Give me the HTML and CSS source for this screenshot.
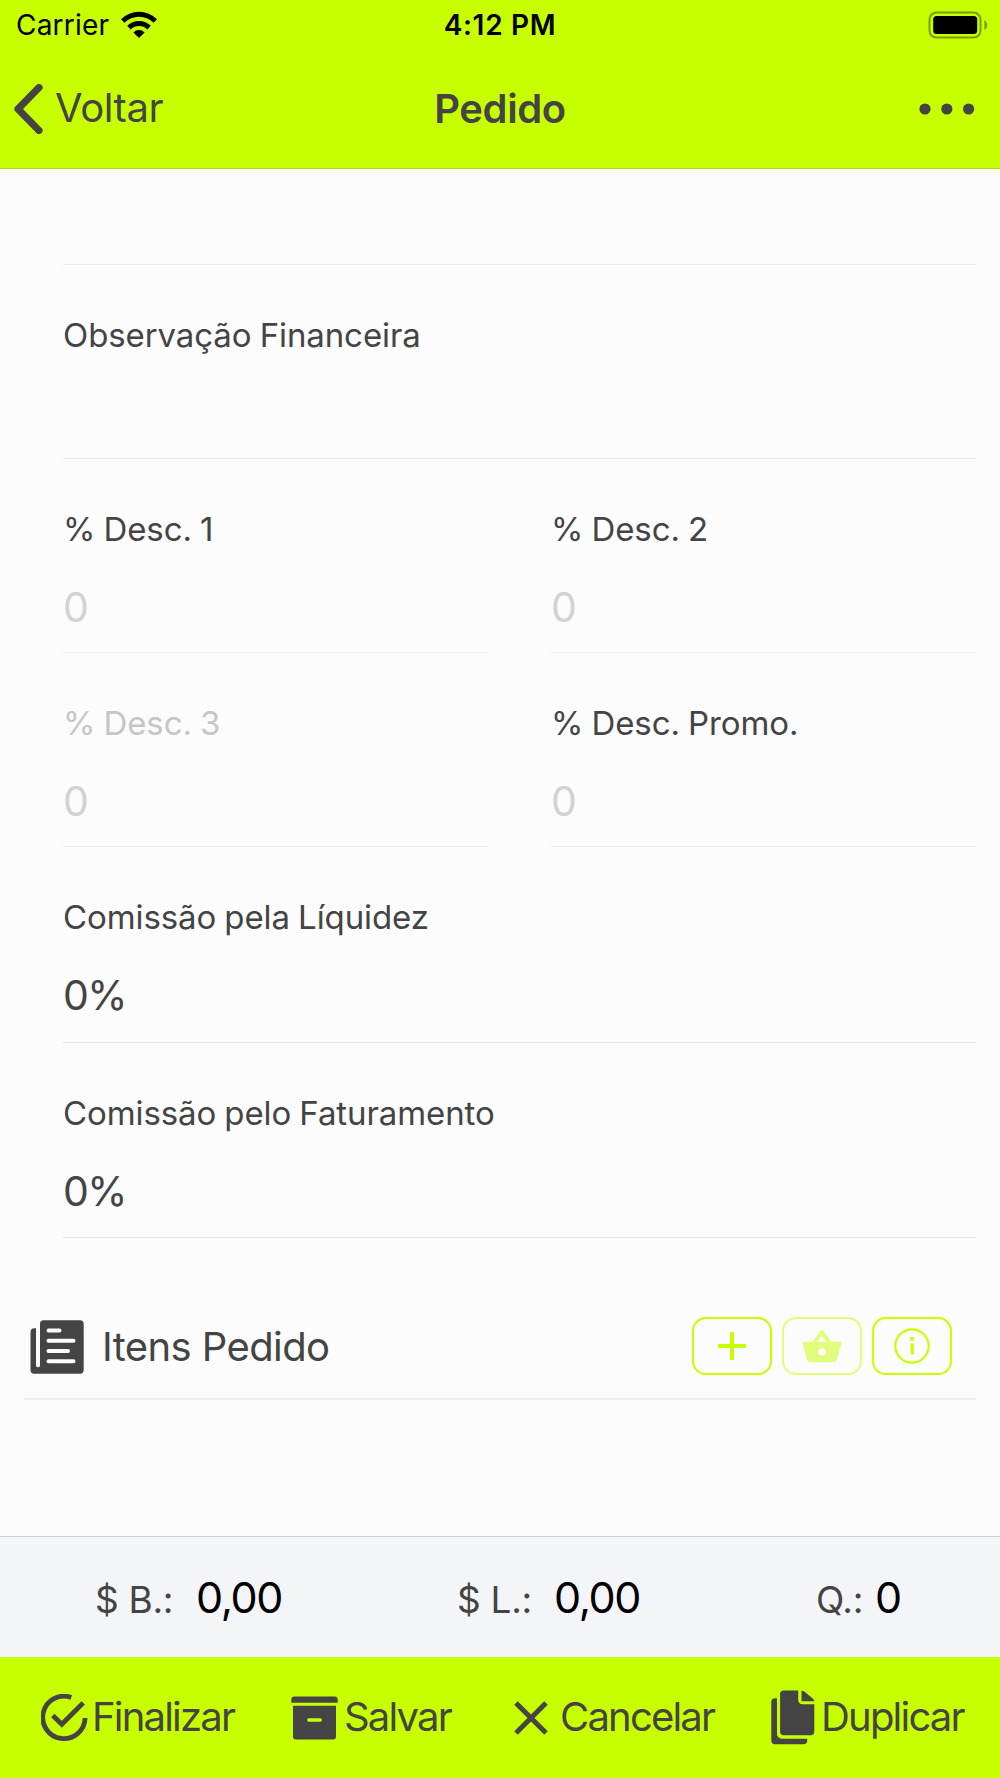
FILE: index.html
```html
<!DOCTYPE html>
<html lang="pt-BR">
<head>
    <meta charset="UTF-8">
    <meta name="viewport" content="width=device-width, initial-scale=1.0">
    <title>Pedido</title>
    <link rel="stylesheet" href="styles.css">
</head>
<body>
    <header class="header">
        <div class="status-bar">
            <div class="carrier">
                <span class="carrier-name">Carrier</span>
                <svg class="wifi" width="38" height="28" viewBox="0 0 38 28">
                    <path d="M1 8.200A25.500 25.500 0 0 1 37 8.200L33.600 11.800A20.600 20.600 0 0 0 4.400 11.800Z"/>
                    <path d="M7.200 14.800A16.800 16.800 0 0 1 30.800 14.800L27.400 18.400A11.900 11.900 0 0 0 10.600 18.400Z"/>
                    <path d="M13.400 21.400A7.900 7.900 0 0 1 24.600 21.400L19 27Z"/>
                </svg>
            </div>
            <span class="clock">4:12 PM</span>
            <svg class="battery" width="60" height="28" viewBox="0 0 60 28">
                <rect x="1.500" y="1.500" width="51" height="25" rx="7" fill="none" stroke="#7b9d00" stroke-width="2"/>
                <rect x="5.200" y="5" width="44" height="18" rx="3.500"/>
                <path d="M56.300 9.200C60 11 60 17.200 56.300 19Z" fill="#7b9d00"/>
            </svg>
        </div>
        <nav class="navbar">
            <a class="back">
                <svg width="30" height="50" viewBox="0 0 30 50">
                    <path d="M26 3.600L5 25L26 46.400" fill="none" stroke="#444" stroke-width="7.200" stroke-linecap="round" stroke-linejoin="round"/>
                </svg>
                <span class="back-text">Voltar</span>
            </a>
            <h1 class="title">Pedido</h1>
            <svg class="more" width="56" height="12" viewBox="0 0 56 12">
                <circle cx="6" cy="6" r="5.600"/>
                <circle cx="27.800" cy="6" r="5.600"/>
                <circle cx="49.600" cy="6" r="5.600"/>
            </svg>
        </nav>
    </header>

    <main class="content">
        <form class="form">
            <div class="field field-empty"></div>
            <div class="field">
                <label class="label">Observação Financeira</label>
            </div>
            <div class="field half">
                <label class="label">% Desc. 1</label>
                <div class="value placeholder">0</div>
            </div>
            <div class="field half">
                <label class="label">% Desc. 2</label>
                <div class="value placeholder">0</div>
            </div>
            <div class="field half">
                <label class="label disabled">% Desc. 3</label>
                <div class="value placeholder">0</div>
            </div>
            <div class="field half">
                <label class="label">% Desc. Promo.</label>
                <div class="value placeholder">0</div>
            </div>
            <div class="field tall">
                <label class="label">Comissão pela Líquidez</label>
                <div class="value">0%</div>
            </div>
            <div class="field tall">
                <label class="label">Comissão pelo Faturamento</label>
                <div class="value">0%</div>
            </div>
        </form>

        <section class="items">
            <svg class="items-icon" width="54" height="54" viewBox="0 0 54 54">
                <path d="M6 8.300V46a2.200 2.200 0 0 0 4 0V4a3.700 3.700 0 0 1 3.700-3.700H50A3.700 3.700 0 0 1 53.700 4V50A3.700 3.700 0 0 1 50 53.700H4.200A3.700 3.700 0 0 1 .5 50V12.300A4 4 0 0 1 4.500 8.300Z"/>
                <path d="M18.500 10.400H29.500M18.500 20.700H43.500M18.500 31H38M18.500 41.300H43.500" stroke="#fcfcfc" stroke-width="4" stroke-linecap="round"/>
            </svg>
            <h2 class="items-title">Itens Pedido</h2>
            <div class="actions">
                <button class="btn">
                    <svg width="28" height="28" viewBox="0 0 28 28">
                        <path d="M14 0V28M0 14H28" stroke="#c8ff00" stroke-width="4"/>
                    </svg>
                </button>
                <button class="btn btn-disabled">
                    <svg width="40" height="34" viewBox="0 0 40 34">
                        <path d="M12 14L20 3L28 14" fill="none" stroke="#c8ff00" stroke-width="4" stroke-linejoin="round"/>
                        <path fill="#c8ff00" fill-rule="evenodd" d="M2 12.800H38A1.700 1.700 0 0 1 39.300 15L34.600 31.200A3 3 0 0 1 31.800 33.300H8.200A3 3 0 0 1 5.400 31.200L.700 15A1.700 1.700 0 0 1 2 12.800ZM20 19.300A3.600 3.600 0 1 0 20 26.500A3.600 3.600 0 1 0 20 19.300Z"/>
                    </svg>
                </button>
                <button class="btn">
                    <svg width="36" height="36" viewBox="0 0 36 36">
                        <circle cx="18" cy="18" r="16.700" fill="none" stroke="#c8ff00" stroke-width="2.200"/>
                        <circle cx="18.100" cy="10.800" r="2.100" fill="#c8ff00"/>
                        <path d="M16.200 15.200H19.800V26.500H16.700V17H16.200Z" fill="#c8ff00"/>
                    </svg>
                </button>
            </div>
        </section>
    </main>

    <section class="totals">
        <div class="total"><span class="total-label">$ B.:</span><span class="total-value">0,00</span></div>
        <div class="total"><span class="total-label">$ L.:</span><span class="total-value">0,00</span></div>
        <div class="total total-qty"><span class="total-label">Q.:</span><span class="total-value">0</span></div>
    </section>

    <footer class="toolbar">
        <a class="tool finalizar">
            <svg width="48" height="48" viewBox="0 0 48 48" fill="none" stroke="#444" stroke-width="4.800">
                <path d="M30.200 3.500A21.200 21.200 0 1 0 44.100 24"/>
                <path d="M11.800 21.500L20.800 30.300L42.200 8.900"/>
            </svg>
            <span>Finalizar</span>
        </a>
        <a class="tool salvar">
            <svg width="47" height="44" viewBox="0 0 47 44">
                <path d="M3.500 .5H43.500A3.200 3.200 0 0 1 46.700 3.700V6.700H.300V3.700A3.200 3.200 0 0 1 3.500 .5Z"/>
                <path d="M2 9.700H45V40.500A3 3 0 0 1 42 43.500H5A3 3 0 0 1 2 40.500Z"/>
                <path d="M17.800 24H29.200" stroke="#c8ff00" stroke-width="3.400" stroke-linecap="round"/>
            </svg>
            <span>Salvar</span>
        </a>
        <a class="tool cancelar">
            <svg width="34" height="34" viewBox="0 0 34 34">
                <path d="M2 2L32 32M32 2L2 32" stroke="#444" stroke-width="5"/>
            </svg>
            <span>Cancelar</span>
        </a>
        <a class="tool duplicar">
            <svg width="44" height="55" viewBox="0 0 44 55">
                <path d="M4 8.300H6V44A4.700 4.700 0 0 0 10.700 48.700H36.300V50.200A4 4 0 0 1 32.300 54.200H4A3.700 3.700 0 0 1 .300 50.500V12A3.700 3.700 0 0 1 4 8.300Z"/>
                <path d="M12.800 .500H27.200V10A4.200 4.200 0 0 0 31.400 14.200H43.300V41.500A3.700 3.700 0 0 1 39.600 45.200H12.800A3.700 3.700 0 0 1 9.100 41.500V4.200A3.700 3.700 0 0 1 12.800 .500Z"/>
                <path d="M30.500 .700Q32.500 .700 34 2.100L42 8.700Q43.300 9.900 43.300 11.200H30.500Z"/>
            </svg>
            <span>Duplicar</span>
        </a>
    </footer>
</body>
</html>
```
FILE: styles.css
```css
* {
    box-sizing: border-box;
}
body {
    margin: 0;
    width: 1000px;
    height: 1778px;
    display: flex;
    flex-direction: column;
    background-color: #fcfcfc;
    color: #444;
    font-family: Inter, "Liberation Sans", sans-serif;
    overflow: hidden;
}
svg {
    display: block;
    flex-shrink: 0;
}

/* header */
.header {
    background-color: #c8ff00;
    border-bottom: 1px solid #abda05;
}
.status-bar {
    display: grid;
    grid-template-columns: 1fr auto 1fr;
    align-items: center;
    height: 50px;
    padding: 0 12px;
    color: #000;
    font-size: 28px;
    line-height: 50px;
}
.carrier {
    display: flex;
    align-items: center;
    padding-left: 4px;
    letter-spacing: 0.2px;
}
.carrier-name {
    width: 104px;
}
.clock {
    font-weight: 600;
    letter-spacing: 0.7px;
}
.battery {
    justify-self: end;
}
.navbar {
    display: grid;
    grid-template-columns: 1fr auto 1fr;
    align-items: center;
    height: 118px;
    padding: 0 13px;
    font-size: 40px;
    letter-spacing: -0.4px;
}
.back {
    display: flex;
    align-items: center;
    gap: 12px;
}
.back-text {
    padding-bottom: 3px;
}
.title {
    margin: 0;
    padding-bottom: 2px;
    font-size: 40px;
    font-weight: 600;
}
.more {
    justify-self: end;
    margin-right: 12px;
    fill: #444;
}

/* form */
.content {
    flex: 1;
}
.form {
    display: grid;
    grid-template-columns: 1fr 1fr;
    column-gap: 63px;
    padding: 0 24px 0 63px;
}
.field {
    grid-column: span 2;
    height: 194px;
    padding-top: 50px;
    border-bottom: 1px solid #ebebeb;
}
.field-empty {
    height: 96px;
}
.half {
    grid-column: span 1;
}
.tall {
    height: 195.5px;
    border-bottom-color: #e4e4e4;
}
.label {
    display: block;
    font-size: 33px;
    line-height: 40px;
    letter-spacing: -0.1px;
    word-spacing: -1px;
}
.disabled {
    color: #c6c6c6;
}
.value {
    margin-top: 34px;
    font-size: 41px;
    line-height: 48px;
    letter-spacing: -1.6px;
}
.placeholder {
    color: #d3d3d3;
}

/* items */
.items {
    display: flex;
    align-items: center;
    height: 104px;
    margin: 58px 24px 0;
    padding: 0 24px 0 6px;
    border-bottom: 2px solid #eee;
}
.items-icon {
    fill: #444;
}
.items-title {
    margin: 0 0 2px 18px;
    font-size: 40px;
    font-weight: 400;
    letter-spacing: -0.6px;
}
.actions {
    display: flex;
    gap: 10px;
    margin: 0 0 2px auto;
}
.btn {
    display: flex;
    align-items: center;
    justify-content: center;
    width: 80px;
    height: 58px;
    padding: 0;
    background: none;
    border: 2px solid #c8ff00;
    border-radius: 14px;
}
.btn-disabled {
    opacity: 0.5;
}

/* totals */
.totals {
    display: flex;
    align-items: center;
    height: 121px;
    padding-left: 95px;
    background-color: #f4f5f8;
    border-top: 1px solid #cdd0d2;
}
.total {
    display: flex;
    flex-shrink: 0;
    align-items: baseline;
    width: 359px;
}
.total:first-child {
    width: 362px;
}
.total-label {
    width: 101px;
    font-size: 37px;
    letter-spacing: -0.3px;
}
.total:nth-child(2) .total-label {
    width: 97px;
}
.total-value {
    color: #000;
    font-size: 43px;
    letter-spacing: -1.4px;
}
.total-qty {
    width: auto;
}
.total-qty .total-label {
    width: 59px;
}

/* toolbar */
.toolbar {
    display: grid;
    grid-template-columns: 250px 223px 257px 1fr;
    align-items: center;
    height: 121px;
    padding-left: 41px;
    background-color: #c8ff00;
    font-size: 40px;
    letter-spacing: -1.8px;
    fill: #444;
}
.tool {
    display: flex;
    align-items: center;
    gap: 6px;
}
.tool span {
    padding-bottom: 2px;
}
.finalizar {
    gap: 3px;
}
.cancelar {
    gap: 12px;
}
```
